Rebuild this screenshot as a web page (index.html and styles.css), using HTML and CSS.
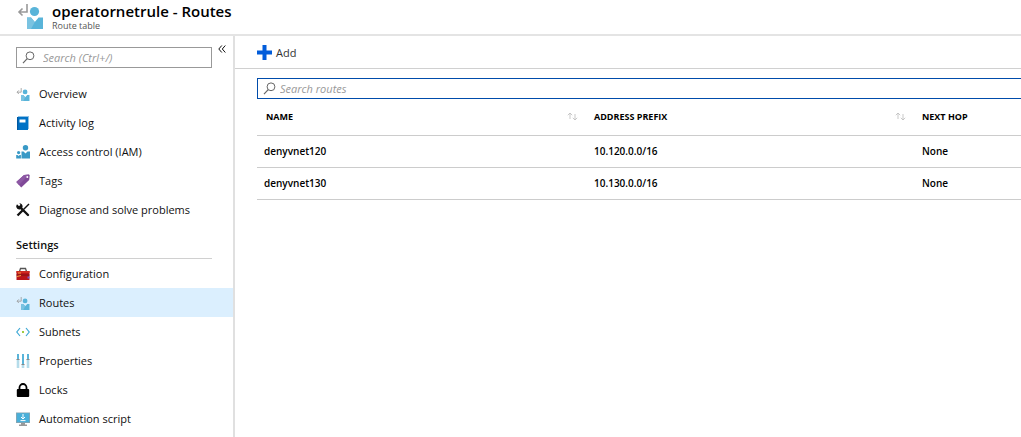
FILE: index.html
```html
<!DOCTYPE html>
<html lang="en">
<head>
<meta charset="utf-8">
<title>operatornetrule - Routes</title>
<link rel="stylesheet" href="styles.css">
</head>
<body>
<svg class="defs" aria-hidden="true">
  <symbol id="route" viewBox="0 0 27 27">
    <path d="M10 2v8H2M5.500 6.500L2 10l3.500 3.500" fill="none" stroke="#999" stroke-width="1.600"/>
    <circle cx="17.500" cy="9.500" r="4.600" fill="#59b4d9"/>
    <path d="M10 15.500h4l3.800 4.500 3.800-4.500H26V27H10z" fill="#59b4d9"/>
    <path d="M10 15.500h4l3.800 4.500L14 27h-4z" fill="#7ac3e1"/>
  </symbol>
  <symbol id="search" viewBox="0 0 13 13">
    <circle cx="8" cy="4.800" r="3.900" fill="none" stroke="currentColor"/>
    <path d="M5.200 7.600L1 12.200" stroke="currentColor" stroke-width="1.200"/>
  </symbol>
  <symbol id="sort" viewBox="0 0 11 9">
    <path d="M3 7V1M.8 3.200L3 1l2.200 2.200M8 2v6M5.800 5.800L8 8l2.200-2.200" fill="none" stroke="#bbb" stroke-width=".8"/>
  </symbol>
</svg>
<header class="header">
  <svg class="header-icon"><use href="#route"/></svg>
  <div>
    <h1 class="title">operatornetrule - Routes</h1>
    <p class="subtitle">Route table</p>
  </div>
</header>
<div class="shell">
  <aside class="sidebar">
    <div class="side-top">
      <label class="search side-search">
        <svg class="search-icon"><use href="#search"/></svg>
        <input class="search-input" type="text" placeholder="Search (Ctrl+/)" aria-label="Search (Ctrl+/)">
      </label>
      <button class="collapse" type="button" aria-label="Collapse menu">
        <svg class="collapse-icon" viewBox="0 0 8 8"><path d="M3.800.5L.8 4l3 3.500M7.300.5l-3 3.500 3 3.500" fill="none" stroke="#111" stroke-width="1"/></svg>
      </button>
    </div>
    <nav class="menu">
      <a class="item" href="#"><svg class="icon"><use href="#route"/></svg>Overview</a>
      <a class="item" href="#"><svg class="icon" viewBox="0 0 14 14"><path d="M2 0h11v13H2z" fill="#8fc1e5"/><path d="M1 1h11v13H1z" fill="#0072c6"/><path d="M3.500 3.500h6v3h-6z" fill="#fff"/><path d="M1 1h1.300v13H1z" fill="#0058a0"/></svg>Activity log</a>
      <a class="item" href="#"><svg class="icon" viewBox="0 0 14 14"><g fill="#3999c6"><circle cx="9.500" cy="2.800" r="2.700"/><path d="M5.500 6.500h2l2 2 2-2H14V13.500H5.500z"/><circle cx="2.600" cy="7.600" r="1.600"/><path d="M.2 10h1.300l1.100 1 1.100-1h1.200v3.500H.2z"/></g></svg>Access control (IAM)</a>
      <a class="item" href="#"><svg class="icon" viewBox="0 0 14 14"><path d="M.3 8L8 1l5-.5.7.7-.5 4.800-8 7.600z" fill="#804998"/><path d="M.3 8L8 1l5-.5L3 11z" fill="#8d58a4"/><circle cx="11.300" cy="2.900" r="1" fill="#fff"/></svg>Tags</a>
      <a class="item" href="#"><svg class="icon" viewBox="0 0 14 14"><path d="M4 4l8 8" stroke="#111" stroke-width="2.400" stroke-linecap="round"/><path d="M1 1.200L2.800 3l1.300-.5L4.200 1 3 .2a3.300 3.300 0 0 1 3.500 4L4.200 6.500A3.300 3.300 0 0 1 .2 3z" fill="#111"/><path d="M13 1L7.500 6.500" stroke="#111" stroke-width="1.400"/><path d="M6.500 7.500l-5 5" stroke="#111" stroke-width="2.300"/></svg>Diagnose and solve problems</a>
    </nav>
    <h2 class="section">Settings</h2>
    <nav class="menu">
      <a class="item" href="#"><svg class="icon" viewBox="0 0 14 14"><path d="M3.500 4.500l1-3h5l1 3" fill="none" stroke="#555" stroke-width="1.300"/><path d="M.5 4h13v9H.5z" fill="#ba141a"/><path d="M.5 4h13v2H.5z" fill="#cf2a22"/><path d="M.5 8h13" stroke="#7d1014"/><path d="M1 9.500l4-1M2 6h3" stroke="#f5a13b"/><path d="M11.500 9.500h2v2h-2z" fill="#7757c8"/></svg>Configuration</a>
      <a class="item selected" href="#" aria-current="page"><svg class="icon"><use href="#route"/></svg>Routes</a>
      <a class="item" href="#"><svg class="icon" viewBox="0 0 14 14"><path d="M4 3L.8 7 4 11M10 3l3.200 4L10 11" fill="none" stroke="#3fa9d5" stroke-width="1.200"/><circle cx="7" cy="7" r="1" fill="#7fba00"/></svg>Subnets</a>
      <a class="item" href="#"><svg class="icon" viewBox="0 0 14 14"><path d="M2 5v9M7 10v4M12 5v9" stroke="#b5dcea" stroke-width="2.600"/><path d="M2 0v5M7 0v10M12 0v5" stroke="#59b4d9" stroke-width="2"/><path d="M.5 5.500h3M5.500 10.500h3M10.500 5.500h3" stroke="#888" stroke-width="1.200"/></svg>Properties</a>
      <a class="item" href="#"><svg class="icon" viewBox="0 0 14 14"><path d="M3.500 7V4.500a3.500 3.500 0 0 1 7 0V7" fill="none" stroke="#000" stroke-width="1.800"/><rect x=".8" y="6" width="12.400" height="8" rx="1"/></svg>Locks</a>
      <a class="item" href="#"><svg class="icon" viewBox="0 0 14 14"><path d="M0 .5h14V11H0z" fill="#8aa5b0"/><path d="M.8 1.200h12.400v9H.8z" fill="#49afd9"/><path d="M5 11h4v1.500h2V14H3v-1.500h2z" fill="#999"/><path d="M7 2v5M5 5l2 2 2-2M4.500 8.600h5" fill="none" stroke="#fff"/></svg>Automation script</a>
    </nav>
  </aside>
  <main class="main">
    <div class="toolbar">
      <button class="add" type="button"><svg class="add-icon" viewBox="0 0 15 15"><path d="M5.500 0h4v5.500H15v4H9.500V15h-4V9.500H0v-4h5.500z" fill="#015cda"/></svg>Add</button>
    </div>
    <div class="content">
      <label class="search route-search">
        <svg class="search-icon"><use href="#search"/></svg>
        <input class="search-input" type="text" placeholder="Search routes" aria-label="Search routes">
      </label>
      <table class="routes">
        <thead>
          <tr>
            <th class="col"><span class="head">Name<svg class="sort"><use href="#sort"/></svg></span></th>
            <th class="col"><span class="head">Address prefix<svg class="sort"><use href="#sort"/></svg></span></th>
            <th><span class="head">Next hop</span></th>
          </tr>
        </thead>
        <tbody>
          <tr><td>denyvnet120</td><td>10.120.0.0/16</td><td>None</td></tr>
          <tr><td>denyvnet130</td><td>10.130.0.0/16</td><td>None</td></tr>
        </tbody>
      </table>
    </div>
  </main>
</div>
</body>
</html>
```
FILE: styles.css
```css
* { box-sizing: border-box; }
body {
  margin: 0;
  min-height: 100vh;
  display: flex;
  flex-direction: column;
  background: #fff;
  color: #111;
  font: 11px/16px "Open Sans", "Noto Sans", sans-serif;
}
button, input { font: inherit; color: inherit; }
.defs { position: absolute; width: 0; height: 0; }
.header {
  display: flex;
  gap: 8px;
  padding: 2px 0 2px 17px;
  border-bottom: 2px solid #e4e4e4;
}
.header-icon { width: 27px; height: 27px; }
.title { margin: 0; font-size: 15px; line-height: 18px; font-weight: 600; color: #000; }
.subtitle { margin: 0; font-size: 9px; line-height: 12px; color: #555; }
.shell { flex: 1; display: flex; }
.sidebar { flex: none; width: 235px; border-right: 2px solid #e0e0e0; }
.side-top { display: flex; align-items: flex-start; gap: 6px; padding: 9px 6px 11px 16px; }
.search { display: flex; align-items: center; gap: 4px; height: 21px; padding-left: 5px; }
.side-search { flex: none; width: 196px; margin-top: 2px; gap: 8px; border: 1px solid #999; }
.search-icon { flex: none; width: 13px; height: 13px; color: #666; }
.search-input { flex: 1; min-width: 0; padding: 0; border: 0; outline: 0; background: none; }
.search-input::placeholder { color: #999; font-style: italic; opacity: 1; }
.collapse { padding: 0; border: 0; background: none; line-height: 0; }
.collapse-icon { width: 8px; height: 8px; }
.item {
  display: flex;
  align-items: center;
  gap: 9px;
  height: 29px;
  padding-left: 16px;
  color: #111;
  text-decoration: none;
}
.selected { background: #dbeffe; }
.icon { flex: none; width: 14px; height: 14px; }
.section {
  margin: 13px 21px 0 16px;
  padding-bottom: 5px;
  border-bottom: 1px solid #d0d0d0;
  font-size: 11px;
  line-height: 16px;
  font-weight: 600;
}
.main { flex: 1; min-width: 0; }
.toolbar { display: flex; height: 33px; padding-left: 22px; border-bottom: 1px solid #d0d0d0; }
.add { display: flex; align-items: center; gap: 4px; padding: 1px 0 0; border: 0; background: none; color: #333; }
.add-icon { width: 15px; height: 15px; }
.content { padding: 9px 0 0 22px; }
.route-search { border: 1px solid #004cab; border-right: 0; }
.routes { width: 100%; table-layout: fixed; border-collapse: collapse; color: #000; }
.col { width: 328px; }
.routes th, .routes td { padding: 0 0 0 9px; border-bottom: 1px solid #ccc; text-align: left; }
.routes th { height: 36px; font-size: 9px; font-weight: 700; text-transform: uppercase; }
.routes td { height: 32px; font-size: 10px; font-weight: 600; }
.routes td:first-child { padding-left: 7px; }
.head { display: flex; align-items: center; justify-content: space-between; padding-right: 7px; }
.sort { width: 11px; height: 9px; }
```
